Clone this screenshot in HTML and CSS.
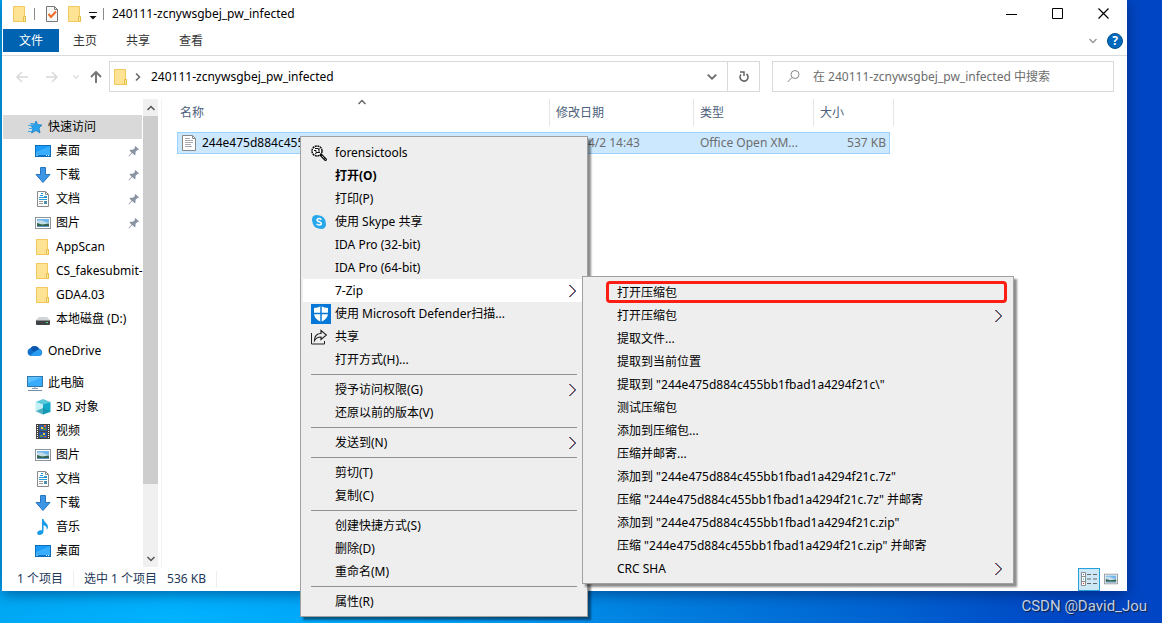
FILE: index.html
```html
<!DOCTYPE html>
<html lang="zh-CN">
<head>
<meta charset="utf-8">
<title>240111-zcnywsgbej_pw_infected</title>
<link rel="stylesheet" href="styles.css">
</head>
<body>
<svg class="defs" aria-hidden="true">
  <symbol id="folder" viewBox="0 0 16 16"><path d="M1.500.5h11v10h1v5h-12z" fill="#ffe394" stroke="#f0c95a"/><path d="M11.500 15v-4.500h2v5h-2" fill="#ffe9a6" stroke="#e8bd45"/></symbol>
  <symbol id="desktop" viewBox="0 0 16 16"><rect x=".5" y="2.500" width="15" height="11" fill="#1b9bf7" stroke="#0b6fbd"/><path d="M1 12V9l14-6v9z" fill="#38aefc"/><path d="M1 12h14v1H1z" fill="#0878cf"/><path d="M1.500 12.500h1M11 12.500h1M13 12.500h1" stroke="#fff"/></symbol>
  <symbol id="download" viewBox="0 0 16 16"><path d="M5.500.5h5v7h4.500L8 15.500 1 7.500h4.500z" fill="#3c96e6" stroke="#2776bd"/></symbol>
  <symbol id="doc" viewBox="0 0 16 16"><path d="M2.500.5h8l3 3v12h-11z" fill="#fff" stroke="#8b8b8b"/><path d="M10.500.5v3h3" fill="none" stroke="#8b8b8b"/><path d="M6 2.500h2M5 4.500h3M9 5.500h3M4 6.500h8M4 8.500h8" stroke="#2b98d8"/><path d="M4 10.500h4M4 12.500h4" stroke="#999"/><rect x="9" y="10" width="3" height="3" fill="#4e8fae"/></symbol>
  <symbol id="picture" viewBox="0 0 16 16"><rect x=".5" y="2.500" width="15" height="11" fill="#fff" stroke="#8f9499"/><path d="M2 4h12v4H2z" fill="#71b7ec"/><path d="M2 6q4-2 8 1l4 1v4H2z" fill="#c5dde9"/><path d="M2 8l5 1.500 7-1V11H2z" fill="#35644f"/><path d="M2 11h12v1H2z" fill="#5b91b8"/></symbol>
  <symbol id="disk" viewBox="0 0 16 16"><path d="M4 6h8l3 3H1z" fill="#d2d5d7"/><rect x="1" y="9" width="14" height="5" rx="1" fill="#3f4345"/><path d="M1.500 9.500h13" stroke="#8a8e90"/><path d="M11 11.500h2" stroke="#4be07a"/></symbol>
  <symbol id="star" viewBox="0 0 16 16"><path d="M9 2l1.800 3.700 4.200.3-3 3 1 5-4-2.500L4.500 14l1.500-4.500L3.500 6l4-.2z" fill="#2aa3ef" stroke="#1174bd" stroke-width=".7"/><path d="M3 4.500h4M1 6.500h5M2 9.500h4M1 12.500h4" stroke="#3da9ee"/></symbol>
  <symbol id="pin" viewBox="0 0 12 12"><path d="M7.500 1l3.500 3.500-1 .8-.7-.3L7.500 7v2.500l-1 .8-2.200-2.200L1 11.500l-.5-.5 3-3.300L1.500 5.600l.8-.9H5L7 2.700 6.700 2z" fill="#8995a3"/></symbol>
  <symbol id="cloud" viewBox="0 0 16 16"><path d="M4 13a4 4 0 0 1-.5-7.800A5 5 0 0 1 12 5.500 4 4 0 0 1 13 13z" fill="#0f6fc9"/><path d="M3.500 5.200a5 5 0 0 1 8.500.8L7 9z" fill="#0a55ad"/><path d="M3 13l4-4 5-2.800A3.700 3.700 0 0 1 13 13z" fill="#2a9df0"/></symbol>
  <symbol id="pc" viewBox="0 0 16 16"><rect x=".5" y="1.500" width="15" height="10" fill="#5cc2ff" stroke="#3478ab"/><path d="M1 11V8l14-6v9z" fill="#38acfb"/><path d="M8 12v1.500M5 13.500h6" stroke="#88a0b3"/><path d="M1 15.500h14" stroke="#778fa4"/></symbol>
  <symbol id="cube" viewBox="0 0 16 16"><path d="M8 0l7.500 3L8 6 .5 3z" fill="#5ac9da"/><path d="M.5 3L8 5.500v10L.5 13z" fill="#c2f1f5"/><path d="M15.500 3L8 5.500v10l7.500-2.500z" fill="#12a9c9"/><path d="M1 12l7-3 7 3-7 3.500z" fill="#178fa6" opacity=".7"/></symbol>
  <symbol id="film" viewBox="0 0 16 16"><path d="M1 1h14v15H1z" fill="#47433f"/><path d="M2.500 2v13M13.500 2v13" stroke="#fff" stroke-dasharray="1 1"/><path d="M4 2h8v6H4z" fill="#315fa8"/><path d="M4 9h8v6H4z" fill="#2355a9"/><path d="M6 4h2v2H6zM8 10h2v2H8z" fill="#f2cc34"/><path d="M8 5h3v2H8zM5 12h3v2H5z" fill="#61913b"/><path d="M9 2h2v2H9zM9 13h2v1H9z" fill="#e36939"/></symbol>
  <symbol id="music" viewBox="0 0 16 16"><path d="M7 0h1.500c0 3 4.500 4 4.500 8 0 1-.5 2-1.500 3 1-3-1-4-3-5v6.500c0 2-2 3.500-4 3.500s-3-1.500-2-3 3-2 4.500-1.500z" fill="#159bea"/></symbol>
  <symbol id="chev" viewBox="0 0 10 10"><path d="M1.500 3L5 6.500 8.500 3" fill="none" stroke="currentColor" stroke-width="1.500"/></symbol>
  <symbol id="more" viewBox="0 0 9 14"><path d="M1 1l6 6-6 6" fill="none" stroke="#c8502c"/><path d="M2 1l6 6-6 6" fill="none" stroke="#2b88d8"/><path d="M1.500 1l6 6-6 6" fill="none" stroke="#4a3040" stroke-width=".6"/></symbol>
</svg>

<main class="window">
  <header class="titlebar">
    <svg class="i16"><use href="#folder"/></svg>
    <span class="bar"></span>
    <button class="quick" aria-label="属性"><svg class="i16" viewBox="0 0 16 16"><path d="M2.500.5h8l3 3v12h-11z" fill="#f7f7f7" stroke="#777"/><path d="M10.500.5v3h3" fill="none" stroke="#777"/><path d="M4.500 8l2.500 3 5-5.500" fill="none" stroke="#f06a24" stroke-width="2"/></svg></button>
    <button class="quick" aria-label="新建文件夹"><svg class="i16"><use href="#folder"/></svg></button>
    <button class="quick caret" aria-label="自定义"><svg width="8" height="8" viewBox="0 0 8 8"><path d="M0 .5h8" stroke="#111"/><path d="M.5 4h7L4 7.500z" fill="#111"/></svg></button>
    <span class="bar"></span>
    <h1 class="title">240111-zcnywsgbej_pw_infected</h1>
    <button class="control" aria-label="最小化"><svg width="11" height="11"><path d="M0 6h11" stroke="#000" shape-rendering="crispEdges"/></svg></button>
    <button class="control" aria-label="最大化"><svg width="11" height="11"><path d="M.5.5h10v10H.5z" fill="none" stroke="#000"/></svg></button>
    <button class="control" aria-label="关闭"><svg width="11" height="11"><path d="M.5.5l10 10M10.500.5l-10 10" stroke="#000" stroke-width="1.200"/></svg></button>
  </header>

  <nav class="ribbon">
    <button class="tab file">文件</button>
    <button class="tab">主页</button>
    <button class="tab">共享</button>
    <button class="tab">查看</button>
    <button class="expand" aria-label="展开功能区"><svg class="i10"><use href="#chev"/></svg></button>
    <button class="help" aria-label="帮助">?</button>
  </nav>

  <div class="address">
    <div class="arrows">
      <button class="nav dim" aria-label="后退"><svg width="12" height="12" viewBox="0 0 12 12"><path d="M12 6H1M6 1L1 6l5 5" fill="none" stroke="currentColor" stroke-width="1.500"/></svg></button>
      <button class="nav dim" aria-label="前进"><svg width="12" height="12" viewBox="0 0 12 12"><path d="M0 6h11M6 1l5 5-5 5" fill="none" stroke="currentColor" stroke-width="1.500"/></svg></button>
      <button class="nav dim recent" aria-label="最近"><svg width="8" height="8"><use href="#chev"/></svg></button>
      <button class="nav" aria-label="上移"><svg width="12" height="12" viewBox="0 0 12 12"><path d="M6 12V1M1 6l5-5 5 5" fill="none" stroke="currentColor" stroke-width="2"/></svg></button>
    </div>
    <div class="path">
      <svg class="i16"><use href="#folder"/></svg>
      <svg class="crumb" width="6" height="8" viewBox="0 0 6 8"><path d="M1 .5L4.500 4 1 7.500" fill="none" stroke="#666" stroke-width="1.500"/></svg>
      <span class="where">240111-zcnywsgbej_pw_infected</span>
      <button class="drop" aria-label="历史"><svg width="12" height="12"><use href="#chev"/></svg></button>
      <button class="refresh" aria-label="刷新"><svg width="12" height="12" viewBox="0 0 12 12"><path d="M8.500 3A4 4 0 1 1 3 3.500" fill="none" stroke="#666" stroke-width="1.600"/><path d="M2 1h4v4" fill="none" stroke="#666" stroke-width="1.500"/></svg></button>
    </div>
    <label class="search">
      <svg width="13" height="13" viewBox="0 0 13 13"><circle cx="8" cy="4.500" r="4" fill="none" stroke="#888"/><path d="M5 7.500L.5 12" stroke="#888"/></svg>
      <input type="text" aria-label="搜索" placeholder="在 240111-zcnywsgbej_pw_infected 中搜索">
    </label>
  </div>

  <div class="content">
    <nav class="tree">
      <a class="node root active" href="#"><svg class="i16"><use href="#star"/></svg><span>快速访问</span></a>
      <a class="node" href="#"><svg class="i16"><use href="#desktop"/></svg><span>桌面</span><svg class="pin"><use href="#pin"/></svg></a>
      <a class="node" href="#"><svg class="i16"><use href="#download"/></svg><span>下载</span><svg class="pin"><use href="#pin"/></svg></a>
      <a class="node" href="#"><svg class="i16"><use href="#doc"/></svg><span>文档</span><svg class="pin"><use href="#pin"/></svg></a>
      <a class="node" href="#"><svg class="i16"><use href="#picture"/></svg><span>图片</span><svg class="pin"><use href="#pin"/></svg></a>
      <a class="node" href="#"><svg class="i16"><use href="#folder"/></svg><span>AppScan</span></a>
      <a class="node" href="#"><svg class="i16"><use href="#folder"/></svg><span>CS_fakesubmit-</span></a>
      <a class="node" href="#"><svg class="i16"><use href="#folder"/></svg><span>GDA4.03</span></a>
      <a class="node" href="#"><svg class="i16"><use href="#disk"/></svg><span>本地磁盘 (D:)</span></a>
      <a class="node root group" href="#"><svg class="i16"><use href="#cloud"/></svg><span>OneDrive</span></a>
      <a class="node root group" href="#"><svg class="i16"><use href="#pc"/></svg><span>此电脑</span></a>
      <a class="node" href="#"><svg class="i16"><use href="#cube"/></svg><span>3D 对象</span></a>
      <a class="node" href="#"><svg class="i16"><use href="#film"/></svg><span>视频</span></a>
      <a class="node" href="#"><svg class="i16"><use href="#picture"/></svg><span>图片</span></a>
      <a class="node" href="#"><svg class="i16"><use href="#doc"/></svg><span>文档</span></a>
      <a class="node" href="#"><svg class="i16"><use href="#download"/></svg><span>下载</span></a>
      <a class="node" href="#"><svg class="i16"><use href="#music"/></svg><span>音乐</span></a>
      <a class="node" href="#"><svg class="i16"><use href="#desktop"/></svg><span>桌面</span></a>
    </nav>
    <div class="scrollbar">
      <button class="step up" aria-label="向上"><svg class="i10"><use href="#chev"/></svg></button>
      <div class="thumb"></div>
      <div class="track"></div>
      <button class="step" aria-label="向下"><svg class="i10"><use href="#chev"/></svg></button>
    </div>
    <section class="files">
      <table class="list">
        <colgroup><col class="c-name"><col class="c-date"><col class="c-type"><col class="c-size"><col class="c-edge"></colgroup>
        <thead><tr><th>名称<svg class="sort" viewBox="0 0 10 10"><use href="#chev"/></svg></th><th>修改日期</th><th>类型</th><th class="last">大小</th><th class="edge"></th></tr></thead>
        <tbody><tr>
          <td class="name"><div class="cell"><svg class="i16" viewBox="0 0 16 16"><path d="M1.500.5h10l3 3v12h-13z" fill="#fff" stroke="#888"/><path d="M11.500.5v3h3" fill="none" stroke="#888"/><path d="M4 3.500h5M4 5.500h8M4 7.500h8M4 9.500h6M4 11.500h7" stroke="#a9a9b4"/></svg><span>244e475d884c455bb1fbad1a4294f21c</span></div></td>
          <td>2024/4/2 14:43</td><td>Office Open XM...</td><td class="size">537 KB</td>
        </tr></tbody>
      </table>
    </section>
  </div>

  <footer class="status">
    <span class="count">1 个项目</span>
    <span class="picked"><span>选中 1 个项目</span><span>536 KB</span></span>
    <button class="view on" aria-label="详细信息"><svg width="18" height="16" viewBox="0 0 18 16"><path d="M1.500 1.500h4v13h-4zM1.500 5.500h4M1.500 10.500h4" fill="#fff" stroke="#8b8b8b"/><path d="M3 3.500h1" stroke="#3a79b8"/><path d="M3 8h1" stroke="#3a9be0"/><path d="M3 12.500h1" stroke="#d33"/><path d="M7 3.500h4M13 3.500h4M7 8h4M13 8h4M7 12.500h4M13 12.500h4" stroke="#666"/></svg></button>
    <button class="view" aria-label="大图标"><svg width="14" height="16" viewBox="0 0 16 16"><use href="#picture"/></svg></button>
  </footer>
</main>

<menu class="menu context">
  <li><button class="item"><svg class="ico i16" viewBox="0 0 16 16"><circle cx="6" cy="6" r="5" fill="#fff" stroke="#111" stroke-width="1.500" stroke-dasharray="2 .6"/><path d="M4 3.500h3l1 1.500M3 5.500h2v2h4M4 9l2-1.500M8 3v4" fill="none" stroke="#111"/><path d="M9.500 9.500l6 6" stroke="#111" stroke-width="3"/><path d="M11 11l4 4" stroke="#fff" stroke-dasharray="1 1"/></svg>forensictools</button></li>
  <li><button class="item strong">打开(O)</button></li>
  <li><button class="item">打印(P)</button></li>
  <li><button class="item"><svg class="ico i16" viewBox="0 0 16 16"><circle cx="5.500" cy="5.500" r="4.500" fill="#28a8ea"/><circle cx="10.500" cy="10.500" r="4.500" fill="#28a8ea"/><circle cx="8" cy="8" r="6.500" fill="#28a8ea"/><path d="M10.300 5.800C9.500 4 5.800 4.300 6 6.200c.2 1.900 4.300 1.300 4.300 3.300 0 2-3.800 2-4.600.2" fill="none" stroke="#fff" stroke-width="1.500"/></svg>使用 Skype 共享</button></li>
  <li><button class="item">IDA Pro (32-bit)</button></li>
  <li><button class="item">IDA Pro (64-bit)</button></li>
  <li><button class="item hot">7-Zip<svg class="go"><use href="#more"/></svg></button></li>
  <li><button class="item"><svg class="ico i20" viewBox="0 0 20 20"><path d="M0 0h20v20H0z" fill="#0878d8"/><path d="M10 2q3 2 7 2v5q0 6-7 9-7-3-7-9V4q4 0 7-2z" fill="#fff"/><path d="M10 2v16M3 9.500h14" stroke="#0878d8" stroke-width="1.500"/></svg>使用 Microsoft Defender扫描...</button></li>
  <li><button class="item"><svg class="ico i16" viewBox="0 0 16 16"><path d="M.5 4v11h13v-3" fill="none" stroke="#222"/><path d="M3.500 11.500c0-5 3-7 6.500-7V1.500L15.500 6 10 10.500V8C7 8 5 9 3.500 11.500z" fill="none" stroke="#222" stroke-width="1.200"/></svg>共享</button></li>
  <li><button class="item">打开方式(H)...</button></li>
  <li class="sep"></li>
  <li><button class="item">授予访问权限(G)<svg class="go"><use href="#more"/></svg></button></li>
  <li><button class="item">还原以前的版本(V)</button></li>
  <li class="sep"></li>
  <li><button class="item">发送到(N)<svg class="go"><use href="#more"/></svg></button></li>
  <li class="sep"></li>
  <li><button class="item">剪切(T)</button></li>
  <li><button class="item">复制(C)</button></li>
  <li class="sep"></li>
  <li><button class="item">创建快捷方式(S)</button></li>
  <li><button class="item">删除(D)</button></li>
  <li><button class="item">重命名(M)</button></li>
  <li class="sep"></li>
  <li><button class="item">属性(R)</button></li>
</menu>

<menu class="menu sub">
  <li><button class="item marked">打开压缩包</button></li>
  <li><button class="item">打开压缩包<svg class="go"><use href="#more"/></svg></button></li>
  <li><button class="item">提取文件...</button></li>
  <li><button class="item">提取到当前位置</button></li>
  <li><button class="item">提取到 "244e475d884c455bb1fbad1a4294f21c\"</button></li>
  <li><button class="item">测试压缩包</button></li>
  <li><button class="item">添加到压缩包...</button></li>
  <li><button class="item">压缩并邮寄...</button></li>
  <li><button class="item">添加到 "244e475d884c455bb1fbad1a4294f21c.7z"</button></li>
  <li><button class="item">压缩 "244e475d884c455bb1fbad1a4294f21c.7z" 并邮寄</button></li>
  <li><button class="item">添加到 "244e475d884c455bb1fbad1a4294f21c.zip"</button></li>
  <li><button class="item">压缩 "244e475d884c455bb1fbad1a4294f21c.zip" 并邮寄</button></li>
  <li><button class="item">CRC SHA<svg class="go"><use href="#more"/></svg></button></li>
</menu>
<p class="watermark">CSDN @David_Jou</p>
</body>
</html>
```
FILE: styles.css
```css
*, *::before { box-sizing: border-box; }
body {
  margin: 0;
  min-height: 100vh;
  display: flex;
  flex-direction: column;
  padding: 0 35px 32px 2px;
  background: linear-gradient(90deg, #00a8f4 0, #00b2ff 15%, #009cf4 40%, #0080e0 56%, #0060d0 78%, #0046c4 92%, #0046c4 100%);
  font: 12px/16px "Noto Sans", "Noto Sans CJK SC", sans-serif;
  color: #000;
  overflow: hidden;
}
button, input { font: inherit; color: inherit; border: 0; padding: 0; margin: 0; background: none; }
svg { display: block; flex: none; }
a { color: inherit; text-decoration: none; }
.defs { position: absolute; width: 0; height: 0; }
.i16 { width: 16px; height: 16px; }
.i10 { width: 10px; height: 10px; }
.i20 { width: 20px; height: 20px; }

.window {
  flex: 1;
  display: flex;
  flex-direction: column;
  background: #fff;
  box-shadow: 0 3px 14px rgba(0, 20, 70, .5);
}

.titlebar { display: flex; align-items: center; height: 28px; padding: 0 1px 0 10px; }
.bar { width: 1px; height: 12px; background: #8a8a8a; margin: 0 8px 0 6px; }
.quick { margin-right: 7px; }
.titlebar .quick:first-of-type { margin-left: 1px; }
.caret { margin: 4px 0 0 -1px; }
.title { flex: 1; margin: 0; font-size: 12px; font-weight: 400; }
.control { width: 46px; height: 27px; display: grid; place-items: center; align-self: flex-start; }

.ribbon { display: flex; align-items: center; height: 28px; padding: 0 4px 2px 1px; border-bottom: 1px solid #dadbdc; }
.tab { height: 23px; padding: 0 14px; margin-right: 1px; color: #333; }
.file { width: 56px; background: #0063b1; color: #fff; margin-right: 0; }
.expand { margin-left: auto; margin-right: 9px; color: #999; }
.help { width: 16px; height: 16px; border-radius: 50%; background: #0068bd; border: 1px solid #00538f; color: #fff; font-weight: 700; line-height: 14px; }

.address { display: grid; grid-template-columns: 93px 651fr 354fr; align-items: center; padding: 5px 13px 7px 14px; }
.arrows { display: flex; align-items: center; color: #777; }
.nav { margin-right: 18px; }
.nav.dim { color: #d8d8d8; }
.nav.dim:nth-child(2) { margin-right: 14px; }
.nav.recent { margin-right: 10px; }
.arrows .nav:last-child { margin-right: 0; }
.path { display: flex; align-items: center; height: 31px; border: 1px solid #d9d9d9; padding-left: 3px; }
.crumb { margin: 0 10px 0 6px; }
.where { flex: 1; }
.drop { width: 30px; display: grid; place-items: center; color: #666; }
.refresh { width: 32px; height: 29px; border-left: 1px solid #d9d9d9; display: grid; place-items: center; }
.search { display: flex; align-items: center; height: 31px; margin-left: 12px; border: 1px solid #d9d9d9; padding-left: 14px; gap: 13px; }
.search input { flex: 1; min-width: 0; outline: 0; }
.search input::placeholder { color: #6d6d6d; opacity: 1; }

.content { flex: 1; display: flex; }
.tree { width: 141px; padding: 16px 1px 0; overflow: hidden; }
.node { display: flex; align-items: center; height: 24px; padding-left: 32px; gap: 5px; white-space: nowrap; }
.node.root { padding-left: 24px; }
.node.active { background: #d9d9d9; }
.node.group { margin-top: 8px; }
.pin { width: 12px; height: 12px; margin-left: auto; margin-right: 2px; }
.scrollbar { width: 15px; display: flex; flex-direction: column; background: #f0f0f0; }
.step { height: 17px; display: grid; place-items: center; color: #555; }
.step.up svg { transform: rotate(180deg); }
.thumb { flex: 369; background: #cdcdcd; }
.track { flex: 66; }
.files { flex: 1; margin-left: 3px; border-left: 1px solid #f1f1f1; padding-left: 15px; }

.list { width: 717px; table-layout: fixed; border-collapse: separate; border-spacing: 0; }
.c-name { width: 373px; }
.c-date { width: 144px; }
.c-type { width: 120px; }
.c-size { width: 76px; }
.c-edge { width: 4px; }
.list th { position: relative; height: 27px; text-align: left; font-weight: 400; color: #4c607a; padding: 0 6px; border-right: 1px solid #e5e5e5; }
.list th:first-child { padding-left: 3px; }
.list th.last { border-right: 0; }
.list th.edge { padding: 0; }
.sort { position: absolute; top: -2px; left: 180px; width: 10px; height: 10px; transform: rotate(180deg); color: #666; }
.list tbody::before { content: ""; display: block; height: 6px; }
.list td { height: 22px; padding: 0 6px; background: #cce8ff; border: solid #99d1ff; border-width: 1px 0; color: #6d6d6d; white-space: nowrap; overflow: hidden; }
.list td.name { border-left-width: 1px; color: #000; padding-left: 3px; }
.list td.size { border-right-width: 1px; text-align: right; padding-right: 3px; }
.cell { display: flex; align-items: center; gap: 5px; }

.status { display: flex; align-items: center; height: 24px; padding: 0 5px 0 15px; color: #1e395b; }
.count { padding-right: 10px; margin-right: 10px; border-right: 1px solid #eee; }
.picked { display: flex; gap: 10px; padding-right: 10px; margin-right: auto; border-right: 1px solid #eee; }
.view { width: 22px; height: 23px; display: grid; place-items: center; }
.view.on { background: #cce8f6; border: 1px solid #26a0da; }

.menu {
  position: absolute;
  margin: 0;
  padding: 4px 2px 3px;
  list-style: none;
  background: #eee;
  border: 1px solid #a0a0a0;
  box-shadow: 3px 3px 2px rgba(0, 0, 0, .45);
}
.context { left: 300px; top: 136px; width: 288px; }
.sub { left: 582px; top: 276px; width: 432px; }
.item { position: relative; display: flex; align-items: center; width: 100%; height: 23px; padding-left: 32px; text-align: left; white-space: nowrap; }
.strong { font-weight: 700; }
.hot { background: #fff; }
.ico { position: absolute; left: 8px; }
.go { width: 9px; height: 14px; margin-left: auto; margin-right: 8px; }
.sep { height: 7px; padding: 3px 8px; }
.sep::before { content: ""; display: block; height: 1px; background: #919191; }
.marked::before { content: ""; position: absolute; left: 21px; right: 4px; top: 0; height: 22px; border: 3px solid #fd1d12; border-radius: 4px; }
.watermark { position: absolute; right: 15px; bottom: 8px; margin: 0; font: 15px/18px Roboto, sans-serif; color: #c3cfe6; text-shadow: 1px 1px 1px #123; }
```
